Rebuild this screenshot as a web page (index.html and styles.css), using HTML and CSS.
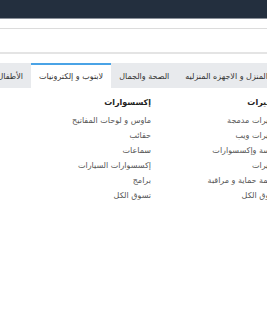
FILE: index.html
```html
<!DOCTYPE html>
<html lang="ar" dir="rtl">
<head>
  <meta charset="utf-8">
  <title>القائمة</title>
  <link rel="stylesheet" href="styles.css">
</head>
<body>
<div id="topbar"></div>
<div id="subbar"></div>
<div id="searchrow"></div>

<div id="menu">
  <div id="tabs">
    <span class="tab">المنزل و الاجهزه المنزليه</span>
    <span class="tab">الصحة والجمال</span>
    <span class="tab active">لابتوب و إلكترونيات</span>
    <span class="tab">الأطفال</span>
  </div>

  <div id="columns">
    <div class="col">
      <h4>كاميرات</h4>
      <a href="#">كاميرات مدمجة</a>
      <a href="#">كاميرات ويب</a>
      <a href="#">عدسة وإكسسوارات</a>
      <a href="#">كاميرات</a>
      <a href="#">أنظمة حماية و مراقبة</a>
      <a href="#">تسوق الكل</a>
    </div>
    <div class="col">
      <h4>إكسسوارات</h4>
      <a href="#">ماوس و لوحات المفاتيح</a>
      <a href="#">حقائب</a>
      <a href="#">سماعات</a>
      <a href="#">إكسسوارات السيارات</a>
      <a href="#">برامج</a>
      <a href="#">تسوق الكل</a>
    </div>
  </div>
</div>
</body>
</html>
```

FILE: styles.css
```css
body{
  margin: 0;
  background: white;
  font-family: "DejaVu Sans", sans-serif;
  overflow: hidden;
}

#topbar{
  height: 18px;
  background: #232f3e;
  border-bottom: 1px solid #8a9099;
}

#subbar{
  height: 9px;
  border-bottom: 1px solid #dcdcdc;
}

#searchrow{
  height: 23px;
  border-bottom: 2px solid #e4e4e4;
}

#menu{
  margin-top: 9px;
  margin-right: -9px;
}

#tabs{
  display: flex;
  white-space: nowrap;
}

.tab{
  background: #e8eaed;
  color: #333;
  font-size: 8px;
  padding: 0 8px;
  height: 23px;
  line-height: 23px;
  border-top: 2px solid transparent;
}

.tab.active{
  background: white;
  border-top-color: #4aa3e6;
}

#columns{
  display: flex;
  padding-top: 7px;
  margin-right: -3px;
}

.col{
  width: 128px;
  display: flex;
  flex-direction: column;
}

h4{
  margin: 0 0 3px;
  font-size: 8px;
  font-weight: bold;
  color: #222;
  line-height: 15px;
}

.col a{
  color: #555;
  text-decoration: none;
  font-size: 8px;
  line-height: 15px;
  white-space: nowrap;
}
```
